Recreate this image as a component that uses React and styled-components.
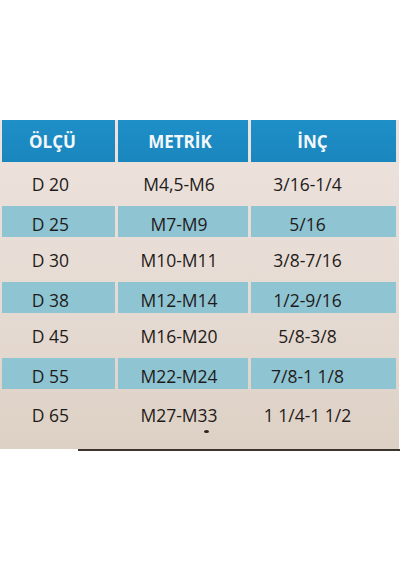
import styled, { createGlobalStyle } from "styled-components";

const rows = [
  { size: "D 20", metric: "M4,5-M6", inch: "3/16-1/4" },
  { size: "D 25", metric: "M7-M9", inch: "5/16" },
  { size: "D 30", metric: "M10-M11", inch: "3/8-7/16" },
  { size: "D 38", metric: "M12-M14", inch: "1/2-9/16" },
  { size: "D 45", metric: "M16-M20", inch: "5/8-3/8" },
  { size: "D 55", metric: "M22-M24", inch: "7/8-1 1/8" },
  { size: "D 65", metric: "M27-M33", inch: "1 1/4-1 1/2" },
];

export default function App() {
  return (
    <>
      <GlobalStyle />
      <Page>
        <Card>
          <Table>
            <HeadCell $first>ÖLÇÜ</HeadCell>
            <HeadCell>METRİK</HeadCell>
            <HeadCell $inch>İNÇ</HeadCell>
            {rows.map(({ size, metric, inch }, i) => {
              const striped = i % 2 === 1;
              const last = i === rows.length - 1;
              return [
                <Cell key={size + "a"} $striped={striped} $last={last} $first>
                  {size}
                </Cell>,
                <Cell key={size + "b"} $striped={striped} $last={last}>
                  {metric}
                  {last ? <Speck /> : null}
                </Cell>,
                <Cell key={size + "c"} $striped={striped} $last={last} $inch>
                  {inch}
                </Cell>,
              ];
            })}
          </Table>
        </Card>
        <Shadow />
      </Page>
    </>
  );
}

const GlobalStyle = createGlobalStyle`
  body {
    margin: 0;
    background: #ffffff;
    font-family: "Open Sans", "DejaVu Sans", sans-serif;
  }
`;

const Page = styled.div`
  width: 400px;
  height: 570px;
  padding-top: 120px;
  box-sizing: border-box;
  background: #ffffff;
`;

const Card = styled.div`
  width: 399px;
  padding: 0 3px 15px 2px;
  box-sizing: border-box;
  background: linear-gradient(180deg, #ede3dd 0%, #e6dbd3 55%, #ddd1c5 100%);
`;

const Table = styled.div`
  display: grid;
  grid-template-columns: 113px 130px 1fr;
  column-gap: 3px;
`;

const HeadCell = styled.div`
  height: 42px;
  display: flex;
  align-items: center;
  justify-content: center;
  padding-right: ${({ $inch, $first }) => ($inch ? "22px" : $first ? "12px" : "6px")};
  background: linear-gradient(180deg, #1f8fc7 0%, #1a86be 100%);
  color: #f4f8fb;
  font-weight: 700;
  font-size: 17px;
`;

const Cell = styled.div`
  position: relative;
  height: ${({ $striped, $last }) => ($last ? "44px" : $striped ? "31px" : "43px")};
  margin: ${({ $striped }) => ($striped ? "1px 0" : "0")};
  display: flex;
  align-items: center;
  justify-content: center;
  padding-top: ${({ $striped, $last }) => ($last ? "6px" : $striped ? "4px" : "0")};
  padding-right: ${({ $inch, $first }) => ($inch ? "32px" : $first ? "16px" : "8px")};
  box-sizing: border-box;
  background: ${({ $striped }) => ($striped ? "#8fc4d3" : "transparent")};
  color: #1f1b1a;
  font-size: 17.5px;
`;

const Speck = styled.span`
  position: absolute;
  left: 86px;
  bottom: 1px;
  width: 5px;
  height: 3px;
  border-radius: 50%;
  background: #2a2320;
`;

const Shadow = styled.div`
  height: 2px;
  margin-left: 78px;
  background: #3b342a;
`;
